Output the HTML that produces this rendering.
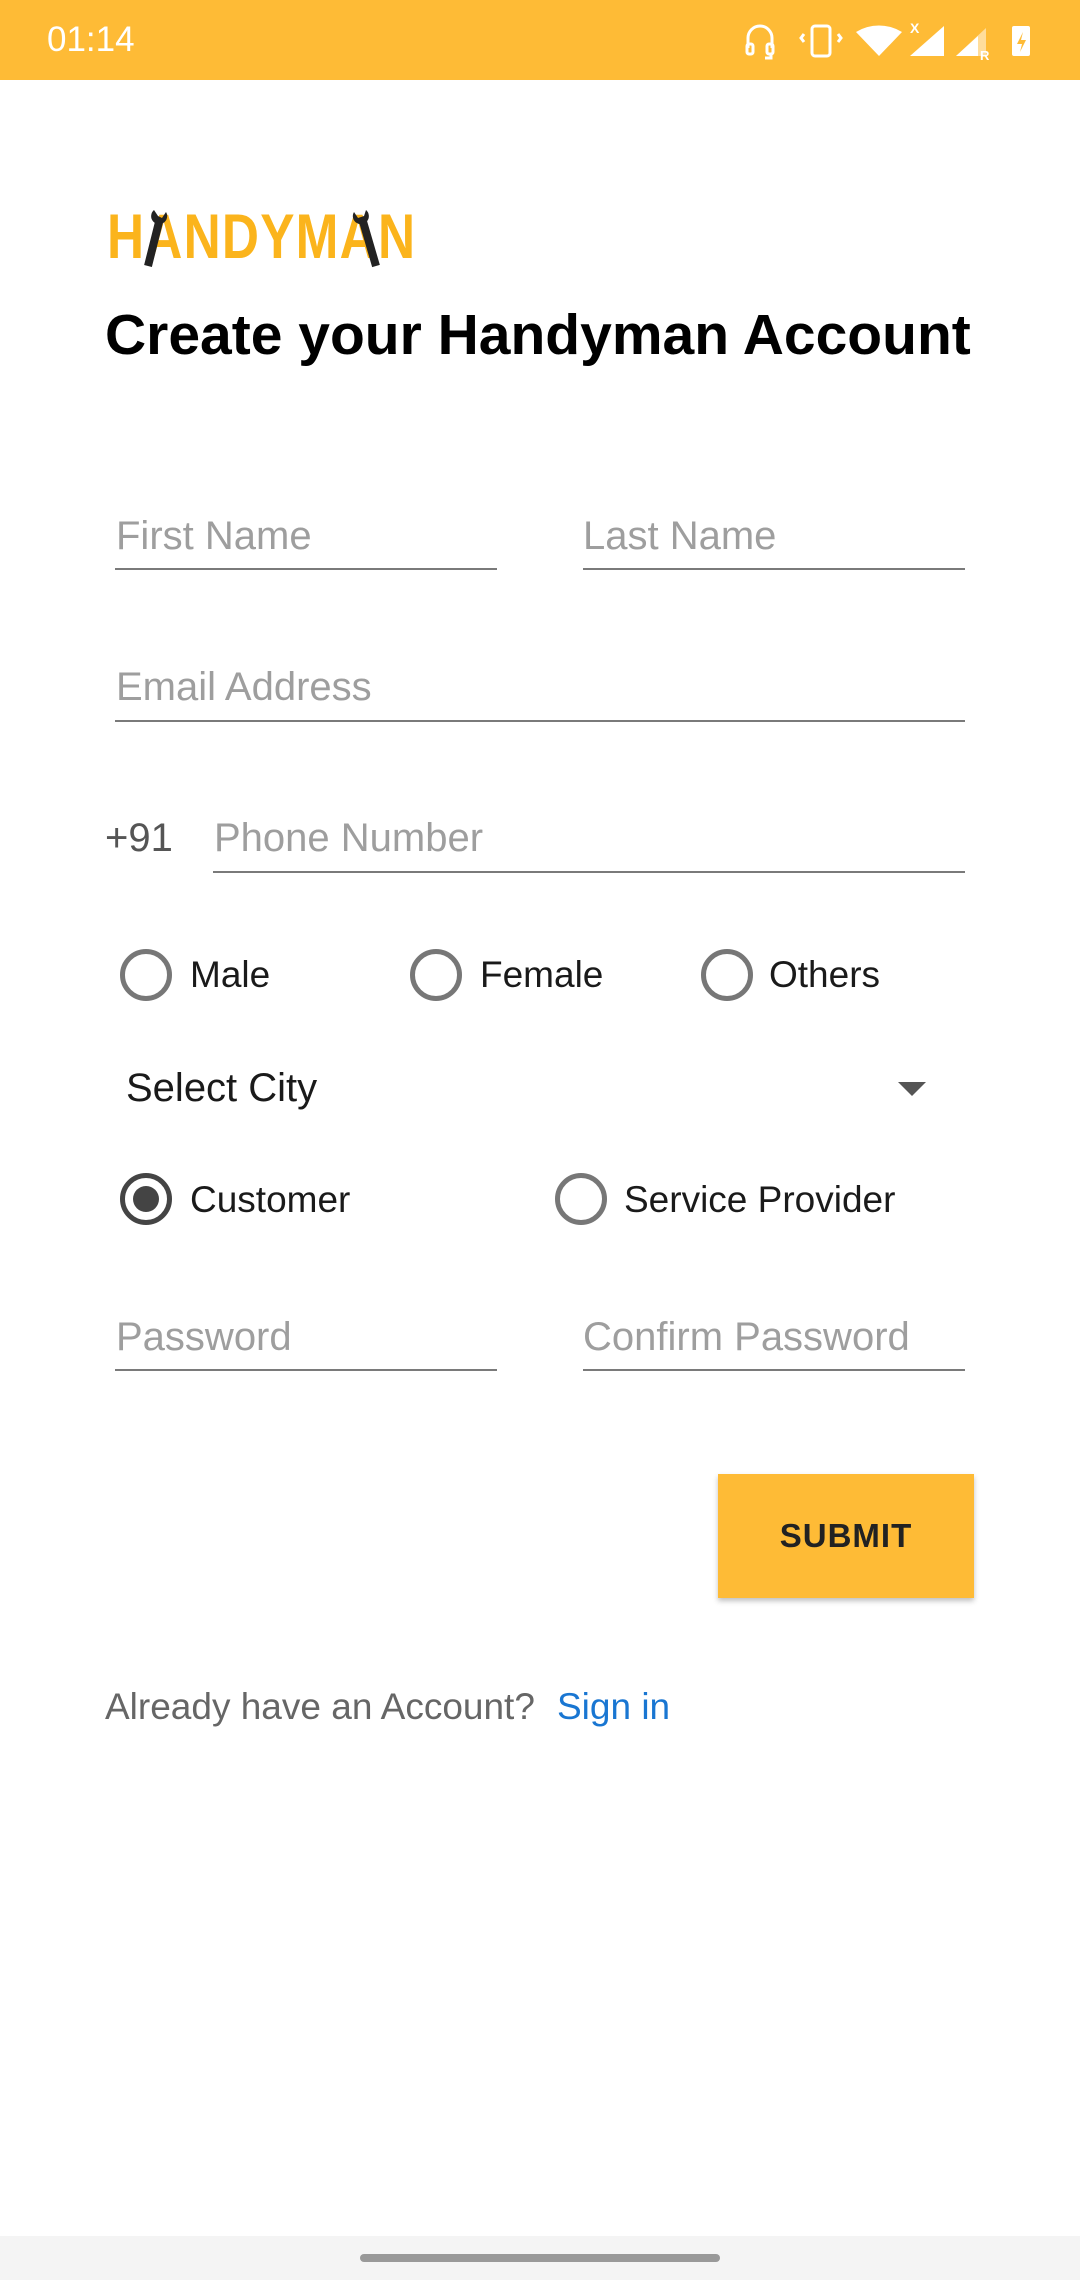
<!DOCTYPE html>
<html><head><meta charset="utf-8"><style>
*{margin:0;padding:0;box-sizing:border-box}
body{width:1080px;height:2280px;background:#fff;position:relative;overflow:hidden;font-family:"Liberation Sans",sans-serif}
.a{position:absolute;white-space:nowrap}
.hint{color:#9e9e9e;font-size:40px;line-height:1}
.line{position:absolute;height:2px;background:#7a7a7a}
.lbl{color:#1a1a1a;font-size:37px;line-height:1}
.r{position:absolute;width:52px;height:52px;border:5px solid #777;border-radius:50%}
</style></head><body>
<div class="a" style="left:0;top:0;width:1080px;height:80px;background:#FEBB36"></div>
<div class="a" style="left:47px;top:20px;font-size:35px;color:#fff">01:14</div>
<svg class="a" style="left:740px;top:18px" width="300" height="46" viewBox="0 0 300 46">
<g fill="none" stroke="#fff" stroke-width="3"><path d="M8 30v-10a12 12 0 0 1 24 0v10"/><rect x="7" y="26" width="6" height="10" rx="2"/><rect x="27" y="26" width="6" height="10" rx="2"/><path d="M31 36v4h-6"/>
<rect x="72" y="8" width="18" height="30" rx="3"/><path d="M64 16l-3 4 3 4M98 16l3 4-3 4"/></g>
<path d="M116 14a44 44 0 0 1 46 0l-23 24z" fill="#fff"/>
<text x="170" y="15" fill="#fff" font-size="14" font-weight="bold" font-family="Liberation Sans">X</text>
<path d="M170 38l34-30v30z" fill="#fff"/>
<path d="M216 38l30-28v28z" fill="#fff" opacity=".5"/><path d="M216 38l22-20v20z" fill="#fff"/>
<text x="240" y="42" fill="#fff" font-size="13" font-weight="bold" font-family="Liberation Sans">R</text>
<rect x="272" y="8" width="18" height="30" rx="2" fill="#fff"/><path d="M283 14l-6 12h5l-2 8 6-12h-5z" fill="#FEBB36"/>
</svg>
<div class="a" style="left:107px;top:206px;font-size:63px;font-weight:bold;color:#FBB41C;letter-spacing:1.5px;transform:scaleX(.815);transform-origin:left;line-height:1">HANDYMAN</div>
<svg class="a" style="left:140px;top:208px" width="30" height="60"><path d="M8 58L20 10" stroke="#222" stroke-width="8"/><path d="M14 2a8 8 0 1 0 12 2l-4 6-4-2z" fill="#222"/></svg>
<svg class="a" style="left:342px;top:208px" width="40" height="60"><path d="M34 58L20 10" stroke="#222" stroke-width="8"/><path d="M12 4a8 8 0 1 0 12-2l-2 6-6 2z" fill="#222"/></svg>
<div class="a" style="left:105px;top:302px;font-size:57px;color:#000;font-weight:bold">Create your Handyman Account</div>
<div class="a hint" style="left:116px;top:516px">First Name</div><div class="line" style="left:115px;top:568px;width:382px"></div>
<div class="a hint" style="left:583px;top:516px">Last Name</div><div class="line" style="left:583px;top:568px;width:382px"></div>
<div class="a hint" style="left:116px;top:667px">Email Address</div><div class="line" style="left:115px;top:720px;width:850px"></div>
<div class="a" style="left:105px;top:818px;font-size:40px;color:#555;line-height:1">+91</div>
<div class="a hint" style="left:214px;top:818px">Phone Number</div><div class="line" style="left:213px;top:871px;width:752px"></div>
<div class="r" style="left:120px;top:949px"></div><div class="a lbl" style="left:190px;top:956px">Male</div>
<div class="r" style="left:410px;top:949px"></div><div class="a lbl" style="left:480px;top:956px">Female</div>
<div class="r" style="left:701px;top:949px"></div><div class="a lbl" style="left:769px;top:956px">Others</div>
<div class="a lbl" style="left:126px;top:1068px;font-size:40px">Select City</div>
<div class="a" style="left:898px;top:1082px;width:0;height:0;border-left:14px solid transparent;border-right:14px solid transparent;border-top:14px solid #555"></div>
<div class="r" style="left:120px;top:1173px;border-color:#444"><div style="position:absolute;left:8px;top:8px;width:26px;height:26px;border-radius:50%;background:#444"></div></div>
<div class="a lbl" style="left:190px;top:1181px">Customer</div>
<div class="r" style="left:555px;top:1173px"></div><div class="a lbl" style="left:624px;top:1181px">Service Provider</div>
<div class="a hint" style="left:116px;top:1317px">Password</div><div class="line" style="left:115px;top:1369px;width:382px"></div>
<div class="a hint" style="left:583px;top:1317px">Confirm Password</div><div class="line" style="left:583px;top:1369px;width:382px"></div>
<div class="a" style="left:718px;top:1474px;width:256px;height:124px;background:#FEBB36;box-shadow:0 3px 5px rgba(0,0,0,.25);text-align:center;line-height:124px;font-size:33px;font-weight:bold;color:#222;letter-spacing:1px">SUBMIT</div>
<div class="a" style="left:105px;top:1688px;font-size:37px;color:#666;line-height:1">Already have an Account?</div>
<div class="a" style="left:557px;top:1688px;font-size:37px;color:#1976D2;line-height:1">Sign in</div>
<div class="a" style="left:0;top:2236px;width:1080px;height:44px;background:#f4f4f4"></div>
<div class="a" style="left:360px;top:2254px;width:360px;height:8px;border-radius:4px;background:#999"></div>
</body></html>
